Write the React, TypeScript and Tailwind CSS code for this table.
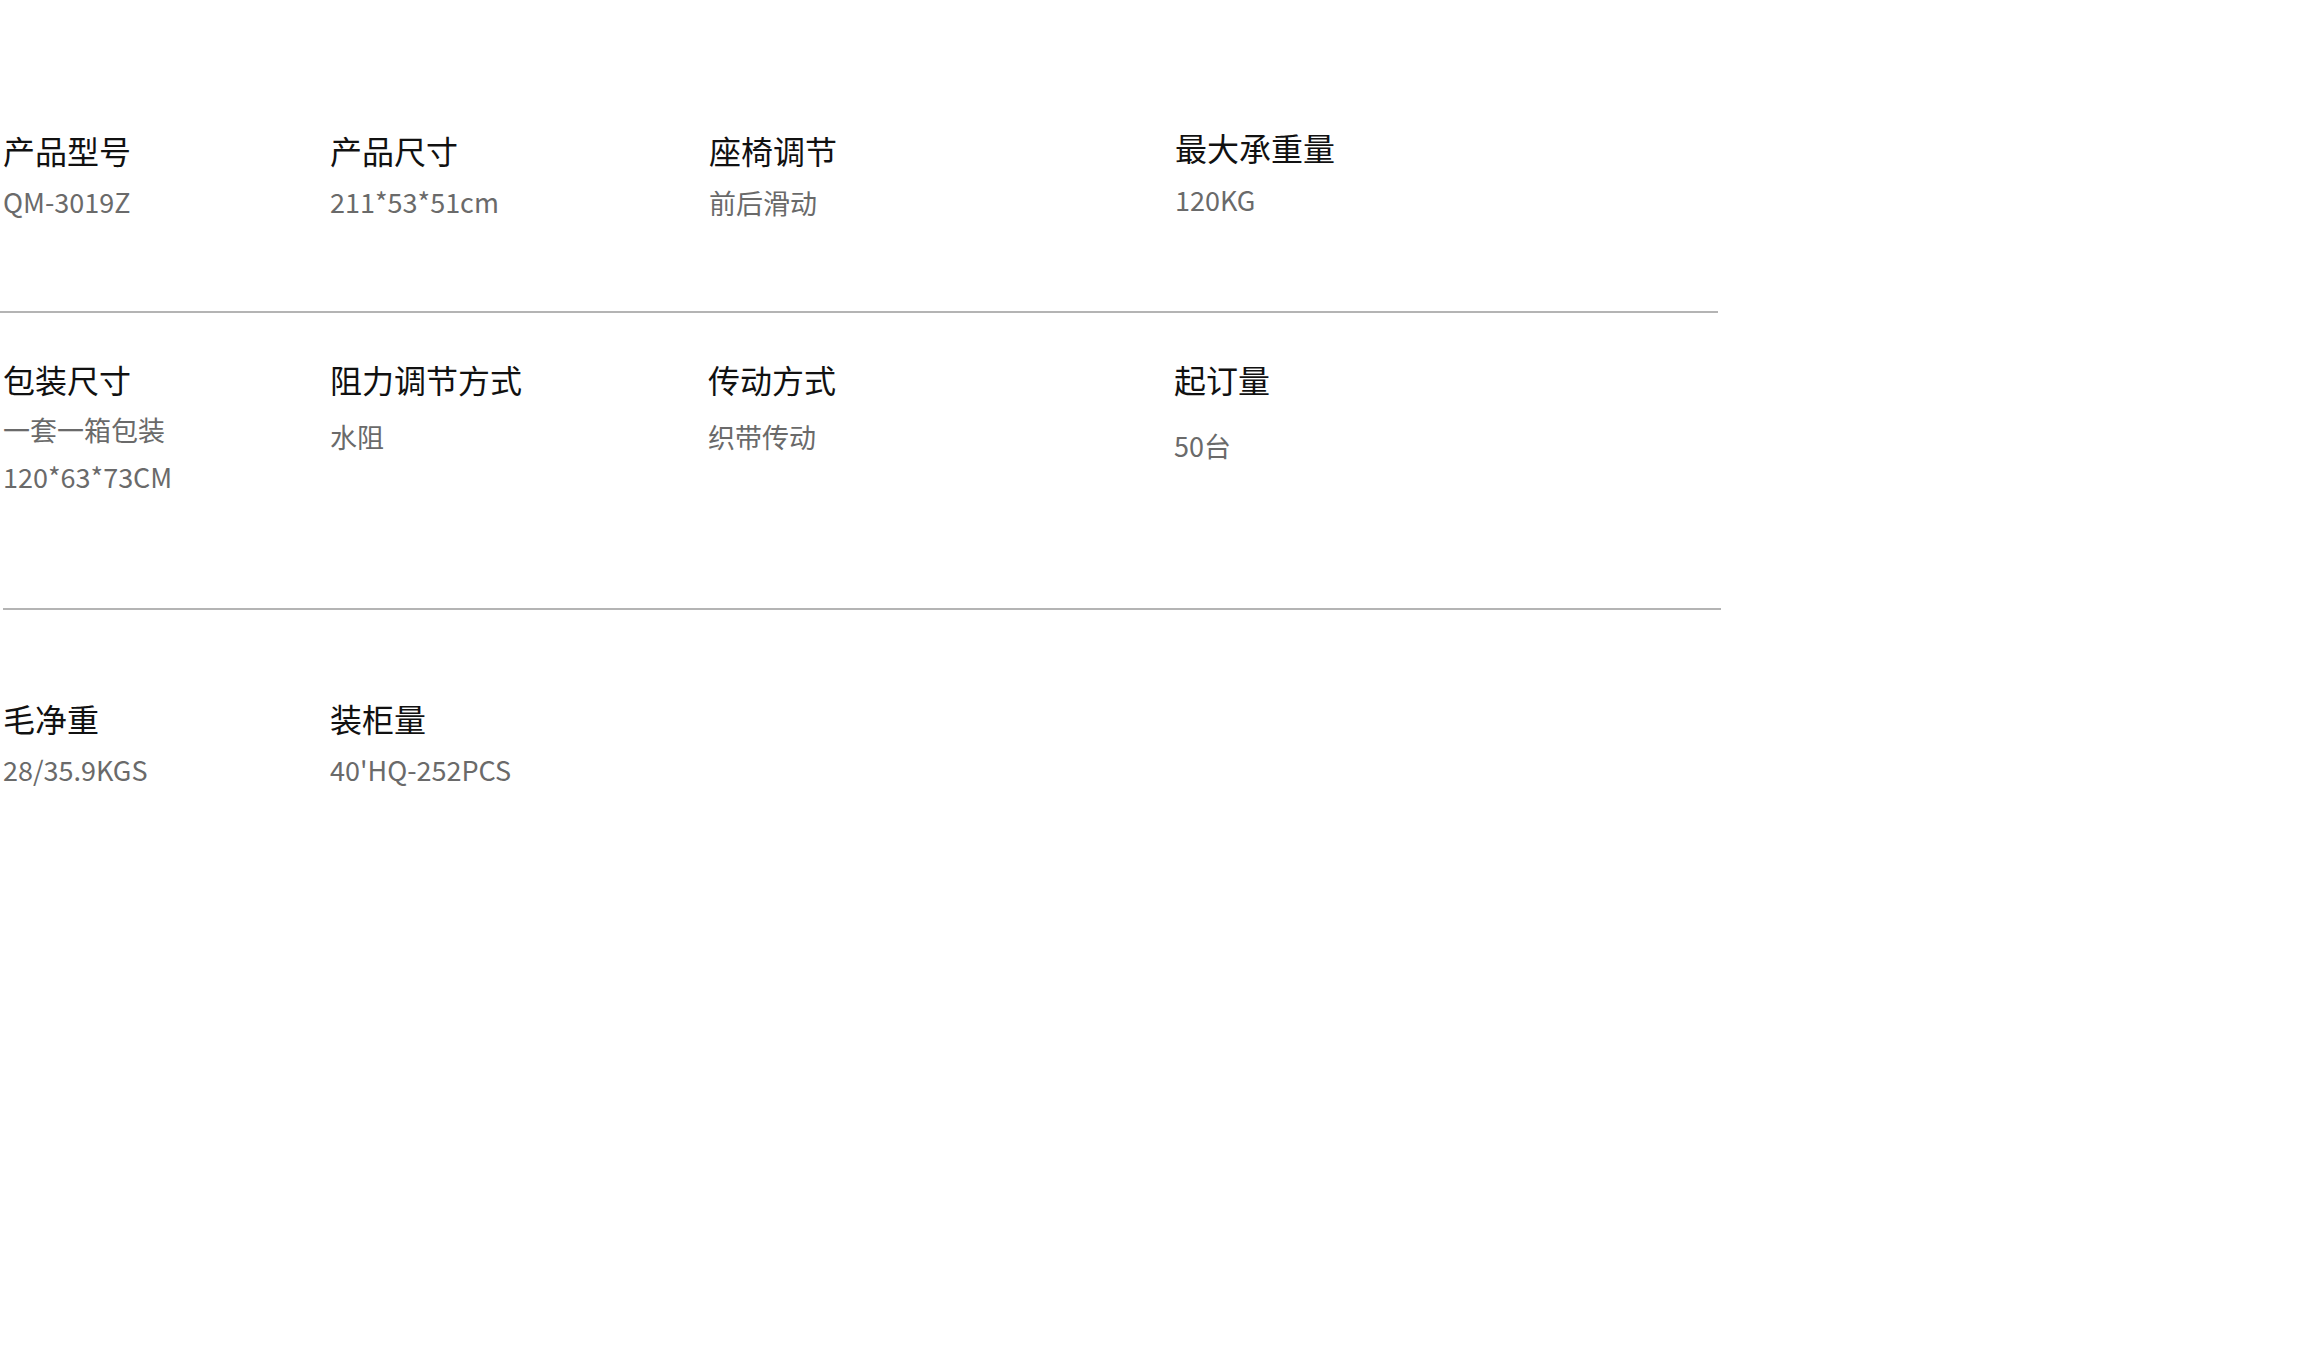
const font = { fontFamily: '"Noto Sans CJK SC", "Noto Sans", sans-serif' };

type Cell = { title: string; values: string[]; w: string; tweak?: string; valueTop?: string };

function Spec({ cell }: { cell: Cell }) {
  return (
    <div className={`${cell.w} ${cell.tweak ?? ''} shrink-0`}>
      <div className="text-[32px] leading-[40px] text-[#111]">{cell.title}</div>
      {cell.values.map((v, i) => (
        <div
          key={i}
          className={`text-[27px] leading-[36px] text-[#6a6a6a] ${i === 0 ? cell.valueTop ?? 'mt-[14px]' : 'mt-[11px]'}`}
        >
          {v}
        </div>
      ))}
    </div>
  );
}

const row1: Cell[] = [
  { title: '产品型号', values: ['QM-3019Z'], w: 'w-[327px]' },
  { title: '产品尺寸', values: ['211*53*51cm'], w: 'w-[378px]' },
  { title: '座椅调节', values: ['前后滑动'], w: 'w-[465px]', tweak: 'pl-[1px]', valueTop: 'mt-[15px]' },
  { title: '最大承重量', values: ['120KG'], w: 'w-[300px]', tweak: '-mt-[3px] pl-[2px]', valueTop: 'mt-[15px]' },
];

const row2: Cell[] = [
  { title: '包装尺寸', values: ['一套一箱包装', '120*63*73CM'], w: 'w-[327px]', valueTop: 'mt-[13px]' },
  { title: '阻力调节方式', values: ['水阻'], w: 'w-[378px]', valueTop: 'mt-[20px]' },
  { title: '传动方式', values: ['织带传动'], w: 'w-[465px]', valueTop: 'mt-[20px]' },
  { title: '起订量', values: ['50台'], w: 'w-[300px]', tweak: 'pl-[1px]', valueTop: 'mt-[29px]' },
];

const row3: Cell[] = [
  { title: '毛净重', values: ['28/35.9KGS'], w: 'w-[327px]' },
  { title: '装柜量', values: ["40'HQ-252PCS"], w: 'w-[378px]' },
];

export default function App() {
  return (
    <div className="min-h-[1367px] w-[2308px] bg-white" style={font}>
      <div className="w-[1720px]">
        <div className="flex h-[311px] pl-[3px] pt-[130px]">
          {row1.map((c) => (
            <Spec key={c.title} cell={c} />
          ))}
        </div>
        <div className="h-[2px] w-[1718px] bg-[#b4b4b4]" />
        <div className="flex h-[295px] pl-[3px] pt-[46px]">
          {row2.map((c) => (
            <Spec key={c.title} cell={c} />
          ))}
        </div>
        <div className="ml-[3px] h-[2px] w-[1718px] bg-[#b4b4b4]" />
        <div className="flex pl-[3px] pt-[88px]">
          {row3.map((c) => (
            <Spec key={c.title} cell={c} />
          ))}
        </div>
      </div>
    </div>
  );
}
